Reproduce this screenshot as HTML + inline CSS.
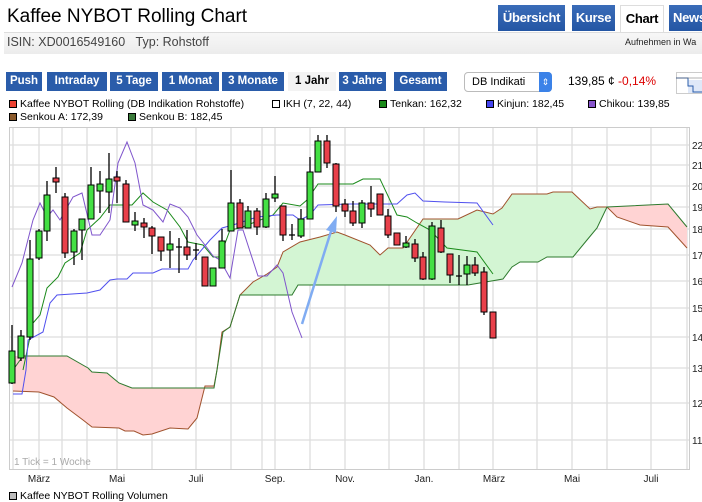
<!DOCTYPE html>
<html><head><meta charset="utf-8"><style>
*{margin:0;padding:0;box-sizing:border-box}
body{width:702px;height:501px;overflow:hidden;background:#fff;font-family:"Liberation Sans",Arial,sans-serif;position:relative;color:#000}
.a{position:absolute;white-space:nowrap}
.tab{position:absolute;top:5px;height:26px;background:linear-gradient(#3a6cb8,#2456a4);color:#fff;font-weight:bold;font-size:13px;line-height:26px;text-align:center;letter-spacing:-0.3px}
.btn{position:absolute;top:72px;height:19px;background:#2a5caa;color:#fff;font-weight:bold;font-size:11.5px;line-height:19px;text-align:center}
.lg{position:absolute;font-size:10.5px;white-space:nowrap}
.sq{display:inline-block;width:8px;height:8px;border:1px solid #000;margin-right:3px;vertical-align:-1px}
.yl{position:absolute;left:692px;font-size:10px}
</style></head><body>
<div class="a" style="left:7px;top:6px;font-size:19px">Kaffee NYBOT Rolling Chart</div>
<div class="tab" style="left:498px;width:67px">Übersicht</div>
<div class="tab" style="left:572px;width:43px">Kurse</div>
<div class="tab" style="left:620px;width:44px;background:#fff;color:#000;border:1px solid #ddd;border-bottom:none;height:28px">Chart</div>
<div class="tab" style="left:669px;width:40px;text-align:left;padding-left:4px">News</div>
<div class="a" style="left:4px;top:32px;width:698px;height:22px;background:linear-gradient(#f7f7f7,#ececec);border-top:1px solid #ddd"></div>
<div class="a" style="left:7px;top:35px;font-size:12.5px;color:#444">ISIN: XD0016549160&nbsp;&nbsp;&nbsp;Typ: Rohstoff</div>
<div class="a" style="left:625px;top:37px;font-size:9px;color:#222">Aufnehmen in Wa</div>

<div class="btn" style="left:6px;width:36px">Push</div>
<div class="btn" style="left:47px;width:60px">Intraday</div>
<div class="btn" style="left:110px;width:48px">5 Tage</div>
<div class="btn" style="left:162px;width:57px">1 Monat</div>
<div class="btn" style="left:222px;width:62px">3 Monate</div>
<div class="btn" style="left:288px;width:48px;background:#f3f3f3;color:#000">1 Jahr</div>
<div class="btn" style="left:339px;width:47px">3 Jahre</div>
<div class="btn" style="left:394px;width:53px">Gesamt</div>
<div class="a" style="left:464px;top:72px;width:88px;height:20px;border:1px solid #bbb;border-radius:4px;background:#fff;font-size:11px;line-height:18px;padding-left:7px;overflow:hidden">DB Indikati</div>
<div class="a" style="left:539px;top:72px;width:13px;height:20px;background:#3b82e8;border-radius:0 4px 4px 0;color:#fff;font-size:9px;line-height:20px;text-align:center">⇕</div>
<div class="a" style="left:568px;top:74px;font-size:12px">139,85 ¢ <span style="color:#d00">-0,14%</span></div>
<svg class="a" style="left:676px;top:72px" width="26" height="22"><rect x="0.5" y="0.5" width="26" height="21" fill="#fff" stroke="#ccc"/><rect x="12" y="8" width="14" height="13" fill="#dfe8f8"/><path d="M0 6H12V14H17V20H26" fill="none" stroke="#2a5caa"/><path d="M0 6H26" stroke="#666" stroke-width="0.6"/></svg>

<div class="lg" style="left:9px;top:98px"><span class="sq" style="background:#e43"></span>Kaffee NYBOT Rolling (DB Indikation Rohstoffe)</div>
<div class="lg" style="left:272px;top:98px"><span class="sq" style="background:#fff"></span>IKH (7, 22, 44)</div>
<div class="lg" style="left:379px;top:98px"><span class="sq" style="background:#1a8a1a"></span>Tenkan: 162,32</div>
<div class="lg" style="left:486px;top:98px"><span class="sq" style="background:#44e"></span>Kinjun: 182,45</div>
<div class="lg" style="left:588px;top:98px"><span class="sq" style="background:#85c"></span>Chikou: 139,85</div>
<div class="lg" style="left:9px;top:111px"><span class="sq" style="background:#8b5a2b"></span>Senkou A: 172,39</div>
<div class="lg" style="left:128px;top:111px"><span class="sq" style="background:#3a7a3a"></span>Senkou B: 182,45</div>

<svg class="a" style="left:0;top:0" width="702" height="501">
<g stroke="#ddd" stroke-width="1.3">
<path d="M9 145H690M9 165H690M9 186H690M9 207H690M9 229H690M9 255H690M9 281H690M9 308H690M9 337H690M9 368H690M9 403H690M9 440H690"/>
<path d="M13 127V469M39 127V469M62 127V469M87 127V469M117 127V469M152 127V469M196 127V469M231 127V469M262 127V469M275 127V469M310 127V469M345 127V469M389 127V469M424 127V469M459 127V469M493 127V469M537 127V469M572 127V469M607 127V469M651 127V469M687 127V469"/>
</g>
<rect x="9.5" y="127.5" width="680" height="342" fill="none" stroke="#ccc"/>
<!-- cloud -->
<path d="M13 391L39 392 54 397 67 408 83 420 92 427 119 428 125 431 134 431 143 435 152 434 170 428 188 429 197 418 205 386 214 386 217 370 214 388 132 388 119 383 107 373 92 372 88 368 67 356 23 356 13 356Z" fill="#ffd3d3"/>
<path d="M217 370L222 332 230 327 240 295 253 282 267 274 277 267 283 252 300 242 320 237 337 232 345 235 370 245 380 255 388 248 403 248 423 219 458 219 477 210 493 214 502 208 512 194 547 194 553 192 572 192 590 209 597 207 607 207 597 228 587 240 573 257 547 257 538 262 520 262 512 267 503 279 468 285 298 285 292 295 240 295 230 327 223 332Z" fill="#d3f5d3"/>
<path d="M607 207L617 217 640 225 668 227 687 248 687 227 668 204 607 207Z" fill="#ffd3d3"/>
<g fill="none" stroke-width="1">
<path d="M13 391L39 392 54 397 67 408 83 420 92 427 119 428 125 431 134 431 143 435 152 434 170 428 188 429 197 418 205 386 214 386 217 370 222 332 230 327 240 295 253 282 267 274 277 267 283 252 300 242 320 237 337 232 345 235 370 245 380 255 388 248 403 248 423 219 458 219 477 210 493 214 502 208 512 194 547 194 553 192 572 192 590 209 597 207 607 207 617 217 640 225 668 227 687 248" stroke="#a0522d"/>
<path d="M13 370L23 356 67 356 88 368 92 372 107 373 119 383 132 388 214 388 217 370 223 332 230 327 240 295 292 295 298 285 468 285 503 279 512 267 520 262 538 262 547 257 573 257 587 240 597 228 607 207 668 204 687 227" stroke="#2e7a2e"/>
<path d="M23 370L33 323 40 315 47 288 58 277 65 263 80 253 87 230 100 218 110 205 132 205 143 193 153 202 167 210 180 227 188 242 203 245 213 257 220 257 230 230 240 228 273 215 283 203 300 206 307 200 318 184 353 184 363 179 380 179 397 215 407 217 417 223 430 230 447 248 477 252 493 274" stroke="#1a8a1a"/>
<path d="M13 394L22 394 26 370 28 340 43 332 50 303 57 295 87 293 100 290 110 280 117 279 127 279 133 273 153 273 162 269 188 269 193 260 210 240 222 228 233 225 257 217 277 215 293 215 300 220 310 215 318 205 350 204 397 204 407 195 415 193 423 201 445 202 477 203 493 225" stroke="#5050ee"/>
<path d="M12 287L22 263 33 220 40 203 47 217 53 210 60 220 73 197 82 193 92 235 100 235 110 220 118 163 127 142 135 163 143 205 153 210 163 222 170 204 180 208 188 217 197 235 205 245 213 256 220 260 230 278 238 230 243 230 258 276 267 276 277 265 283 273 292 312 302 338" stroke="#7f55cc"/>
</g>
<g stroke="#000" stroke-width="1.3">
<path d="M12 325V384M21 330V361M30 240V340M39 229V260M47 181V241M56 167V193M65 193V258M74 229V265M82 219V260M91 167V219M100 171V213M109 153V213M117 171V203M126 180V222M135 212V231M144 218V238M152 226V254M161 237V261M170 231V268M179 238V273M187 230V260M196 243V260M205 257V286M213 268V286M222 229V268M231 170V231M240 199V228M248 206V228M257 208V235M266 193V228M275 176V202M283 206V241M292 224V240M301 209V238M310 157V219M318 135V172M327 135V168M336 163V212M345 199V217M353 201V226M362 200V228M371 186V217M380 194V215M388 209V238M397 233V245M406 236V248M415 239V262M423 252V280M432 222V280M441 220V253M450 254V283M459 255V285M467 256V285M475 257V276M484 267V315M493 312V338"/>
<path d="M176 247H182M193 250H199M289 235H295M456 276H462"/>
</g>
<g stroke="#000" stroke-width="1">
<g fill="#44e044">
<rect x="9" y="351" width="6" height="32"/><rect x="18" y="336" width="6" height="22"/><rect x="27" y="259" width="6" height="78"/><rect x="36" y="231" width="6" height="27"/><rect x="44" y="195" width="6" height="36"/><rect x="71" y="231" width="6" height="21"/><rect x="79" y="219" width="6" height="11"/><rect x="88" y="185" width="6" height="34"/><rect x="97" y="184" width="6" height="7"/><rect x="106" y="179" width="6" height="13"/><rect x="132" y="221" width="6" height="4"/><rect x="167" y="244" width="6" height="6"/><rect x="210" y="268" width="6" height="18"/><rect x="219" y="241" width="6" height="27"/><rect x="228" y="203" width="6" height="28"/><rect x="245" y="211" width="6" height="17"/><rect x="263" y="199" width="6" height="28"/><rect x="272" y="194" width="6" height="4"/><rect x="298" y="219" width="6" height="17"/><rect x="307" y="172" width="6" height="47"/><rect x="315" y="141" width="6" height="31"/><rect x="359" y="203" width="6" height="20"/><rect x="403" y="243" width="6" height="4"/><rect x="429" y="226" width="6" height="53"/><rect x="464" y="265" width="6" height="9"/>
</g>
<g fill="#e8404a">
<rect x="53" y="178" width="6" height="4"/><rect x="62" y="197" width="6" height="56"/><rect x="114" y="177" width="6" height="4"/><rect x="123" y="184" width="6" height="38"/><rect x="141" y="223" width="6" height="4"/><rect x="149" y="228" width="6" height="8"/><rect x="158" y="237" width="6" height="14"/><rect x="184" y="247" width="6" height="8"/><rect x="202" y="257" width="6" height="29"/><rect x="237" y="203" width="6" height="25"/><rect x="254" y="211" width="6" height="16"/><rect x="280" y="206" width="6" height="29"/><rect x="324" y="141" width="6" height="22"/><rect x="333" y="164" width="6" height="42"/><rect x="342" y="204" width="6" height="7"/><rect x="350" y="211" width="6" height="12"/><rect x="368" y="203" width="6" height="6"/><rect x="377" y="194" width="6" height="21"/><rect x="385" y="216" width="6" height="19"/><rect x="394" y="233" width="6" height="12"/><rect x="412" y="244" width="6" height="14"/><rect x="420" y="257" width="6" height="22"/><rect x="438" y="228" width="6" height="24"/><rect x="447" y="254" width="6" height="21"/><rect x="472" y="265" width="6" height="8"/><rect x="481" y="272" width="6" height="40"/><rect x="490" y="312" width="6" height="26"/>
</g></g>
<path d="M302 324L332 228" stroke="#80acf2" stroke-width="2.5"/>
<path d="M337 216L326 230 336 233Z" fill="#80acf2"/>
<text x="14" y="465" font-size="10" fill="#aaa" font-family="Liberation Sans">1 Tick = 1 Woche</text>
<g font-size="10" font-family="Liberation Sans" text-anchor="middle" fill="#222">
<text x="39" y="482">März</text><text x="117" y="482">Mai</text><text x="196" y="482">Juli</text><text x="275" y="482">Sep.</text><text x="345" y="482">Nov.</text><text x="424" y="482">Jan.</text><text x="494" y="482">März</text><text x="572" y="482">Mai</text><text x="651" y="482">Juli</text>
</g>
<g font-size="10" font-family="Liberation Sans" fill="#222">
<text x="692" y="149">220</text><text x="692" y="169">210</text><text x="692" y="190">200</text><text x="692" y="211">190</text><text x="692" y="233">180</text><text x="692" y="259">170</text><text x="692" y="285">160</text><text x="692" y="312">150</text><text x="692" y="341">140</text><text x="692" y="372">130</text><text x="692" y="407">120</text><text x="692" y="444">110</text>
</g>
</svg>
<div class="lg" style="left:9px;top:490px"><span class="sq" style="background:#bbb"></span>Kaffee NYBOT Rolling Volumen</div>
</body></html>
